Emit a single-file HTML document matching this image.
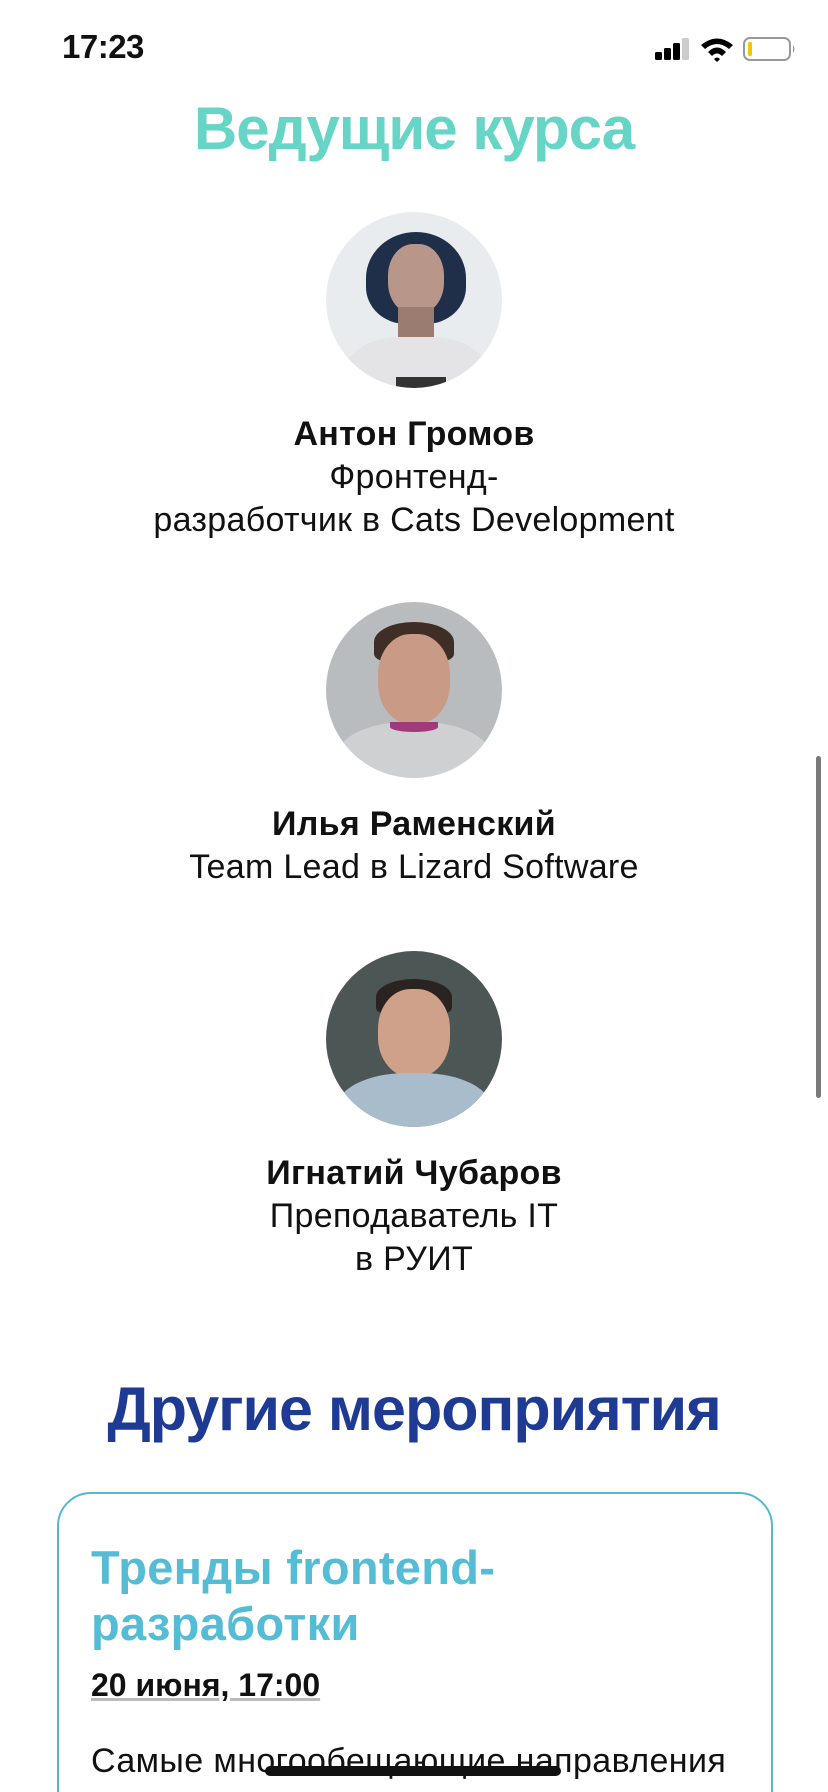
<!DOCTYPE html>
<html><head><meta charset="utf-8"><style>
*{margin:0;padding:0;box-sizing:border-box}
html,body{width:828px;height:1792px;overflow:hidden;background:#fff}
body{font-family:"Liberation Sans","DejaVu Sans",sans-serif;color:#111}
#w{position:relative;width:828px;height:1792px;overflow:hidden}
.a{position:absolute}
.c{position:absolute;left:0;width:828px;text-align:center}
.av{position:absolute;left:326px;width:176px;height:176px;border-radius:50%;overflow:hidden}
.t{font-size:34px;line-height:43px;letter-spacing:0.3px}
.n{font-weight:bold}
</style></head><body><div id="w">
<div class="a" style="left:62px;top:28px;font-size:33px;font-weight:bold;letter-spacing:-0.5px">17:23</div>
<svg class="a" style="left:652px;top:34px" width="150" height="30" viewBox="0 0 150 30">
<rect x="3" y="18" width="7" height="8" rx="1.5" fill="#000"/>
<rect x="12" y="14" width="7" height="12" rx="1.5" fill="#000"/>
<rect x="21" y="9" width="7" height="17" rx="1.5" fill="#000"/>
<rect x="30" y="4" width="7" height="22" rx="1.5" fill="#ccc"/>
<path d="M49 11 Q65 -2 81 11 L77 15 Q65 5 53 15Z M56 18 Q65 9 74 18 L70 22 Q65 17 60 22Z M65 28 L62 25 Q65 22 68 25Z" fill="#000"/>
<rect x="92" y="4" width="46" height="22" rx="6" fill="none" stroke="#999" stroke-width="2"/>
<rect x="96" y="8" width="4" height="14" rx="1.5" fill="#f5c400"/>
<path d="M141 11 Q144 15 141 19Z" fill="#999"/>
</svg>
<div class="c" style="top:94px;font-size:60px;font-weight:bold;color:#66d5c5;letter-spacing:-1px">Ведущие курса</div>

<div class="av" style="top:212px;background:#e9ecee">
<div class="a" style="left:40px;top:20px;width:100px;height:92px;border-radius:50% 50% 40% 40%;background:#1f2f4a"></div>
<div class="a" style="left:62px;top:32px;width:56px;height:70px;border-radius:45%;background:#b8968a"></div>
<div class="a" style="left:72px;top:95px;width:36px;height:40px;background:#9a7c70"></div>
<div class="a" style="left:20px;top:125px;width:140px;height:80px;border-radius:40% 40% 0 0;background:#e4e4e6"></div>
<div class="a" style="left:70px;top:165px;width:50px;height:12px;background:#333"></div>
</div>
<div class="c t" style="top:413px"><span class="n">Антон Громов</span><br>Фронтенд-<br>разработчик в Cats Development</div>

<div class="av" style="top:602px;background:#b9bcbe">
<div class="a" style="left:48px;top:20px;width:80px;height:40px;border-radius:50% 50% 20% 20%;background:#3e2e26"></div>
<div class="a" style="left:52px;top:32px;width:72px;height:90px;border-radius:45%;background:#c99a85"></div>
<div class="a" style="left:10px;top:120px;width:156px;height:80px;border-radius:45% 45% 0 0;background:#cfd0d2"></div>
<div class="a" style="left:64px;top:120px;width:48px;height:10px;border-radius:0 0 50% 50%;background:#a03a7a"></div>
</div>
<div class="c t" style="top:803px"><span class="n">Илья Раменский</span><br>Team Lead в Lizard Software</div>

<div class="av" style="top:951px;background:#4c5654">
<div class="a" style="left:50px;top:28px;width:76px;height:36px;border-radius:50% 50% 20% 20%;background:#2b2320"></div>
<div class="a" style="left:52px;top:38px;width:72px;height:88px;border-radius:45%;background:#cfa08a"></div>
<div class="a" style="left:10px;top:122px;width:156px;height:80px;border-radius:45% 45% 0 0;background:#a9bccb"></div>
</div>
<div class="c t" style="top:1152px"><span class="n">Игнатий Чубаров</span><br>Преподаватель IT<br>в РУИТ</div>

<div class="c" style="top:1374px;font-size:61px;font-weight:bold;color:#1f3a93;letter-spacing:-1px">Другие мероприятия</div>

<div class="a" style="left:57px;top:1492px;width:716px;height:340px;border:2px solid #52b8d4;border-radius:34px"></div>
<div class="a" style="left:91px;top:1540px;font-size:47px;line-height:56px;font-weight:bold;color:#55bcd6;letter-spacing:0.3px">Тренды frontend-<br>разработки</div>
<div class="a" style="left:91px;top:1667px;font-size:32px;font-weight:bold;text-decoration:underline;text-decoration-color:#bbb">20 июня, 17:00</div>
<div class="a" style="left:91px;top:1742px;font-size:34px;letter-spacing:0.4px;white-space:nowrap">Самые многообещающие направления</div>
<div class="a" style="left:265px;top:1766px;width:296px;height:10px;border-radius:5px;background:#111"></div>
<div class="a" style="left:816px;top:756px;width:5px;height:342px;border-radius:3px;background:#7a7a7a"></div>
</div></body></html>
